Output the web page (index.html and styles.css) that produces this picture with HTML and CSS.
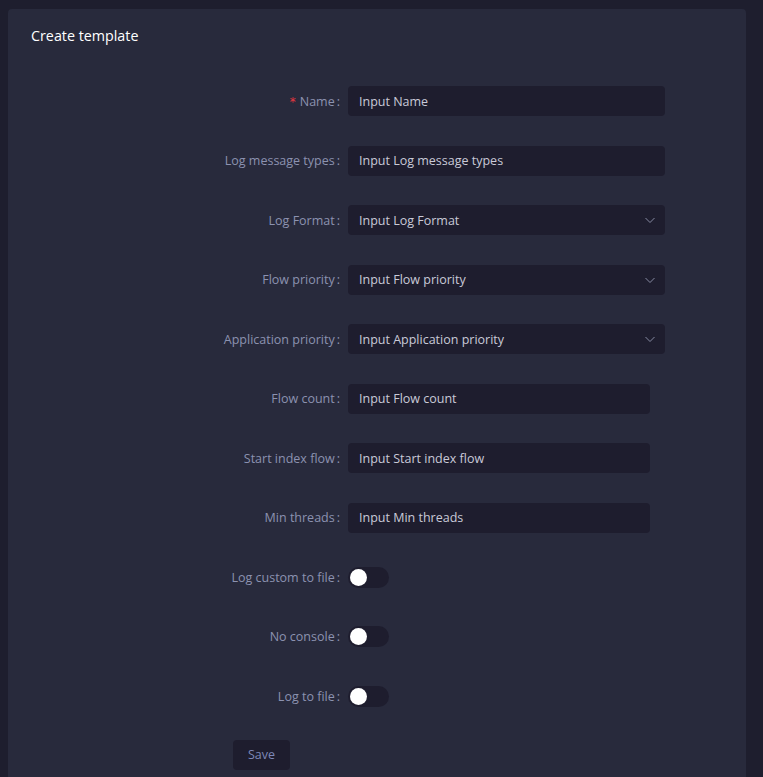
FILE: index.html
```html
<!DOCTYPE html>
<html>
<head>
<meta charset="utf-8">
<link rel="stylesheet" href="styles.css">
</head>
<body>
<div class="card">
  <h1 class="title">Create template</h1>
  <form class="form">
    <div class="row">
      <label class="label"><span class="req">*</span>Name<span class="colon">:</span></label>
      <div class="field wide"><span class="ph">Input Name</span></div>
    </div>
    <div class="row">
      <label class="label">Log message types<span class="colon">:</span></label>
      <div class="field wide"><span class="ph">Input Log message types</span></div>
    </div>
    <div class="row">
      <label class="label">Log Format<span class="colon">:</span></label>
      <div class="field wide select"><span class="ph">Input Log Format</span>
        <svg class="chev" width="12" height="8" viewBox="0 0 12 8"><path d="M1.5 2 L6 6.5 L10.5 2" fill="none" stroke="#868aa2" stroke-width="1"/></svg>
      </div>
    </div>
    <div class="row">
      <label class="label">Flow priority<span class="colon">:</span></label>
      <div class="field wide select"><span class="ph">Input Flow priority</span>
        <svg class="chev" width="12" height="8" viewBox="0 0 12 8"><path d="M1.5 2 L6 6.5 L10.5 2" fill="none" stroke="#868aa2" stroke-width="1"/></svg>
      </div>
    </div>
    <div class="row">
      <label class="label">Application priority<span class="colon">:</span></label>
      <div class="field wide select"><span class="ph">Input Application priority</span>
        <svg class="chev" width="12" height="8" viewBox="0 0 12 8"><path d="M1.5 2 L6 6.5 L10.5 2" fill="none" stroke="#868aa2" stroke-width="1"/></svg>
      </div>
    </div>
    <div class="row">
      <label class="label">Flow count<span class="colon">:</span></label>
      <div class="field narrow"><span class="ph">Input Flow count</span></div>
    </div>
    <div class="row">
      <label class="label">Start index flow<span class="colon">:</span></label>
      <div class="field narrow"><span class="ph">Input Start index flow</span></div>
    </div>
    <div class="row">
      <label class="label">Min threads<span class="colon">:</span></label>
      <div class="field narrow"><span class="ph">Input Min threads</span></div>
    </div>
    <div class="row">
      <label class="label">Log custom to file<span class="colon">:</span></label>
      <div class="switch"><span class="knob"></span></div>
    </div>
    <div class="row">
      <label class="label">No console<span class="colon">:</span></label>
      <div class="switch"><span class="knob"></span></div>
    </div>
    <div class="row">
      <label class="label">Log to file<span class="colon">:</span></label>
      <div class="switch"><span class="knob"></span></div>
    </div>
    <div class="actions">
      <button type="button" class="btn">Save</button>
    </div>
  </form>
</div>
</body>
</html>
```
FILE: styles.css
```css
html, body {
  margin: 0;
  padding: 0;
  background: #1e1e2e;
  height: 100%;
  overflow: hidden;
}
body {
  padding: 9px 17px 0 8px;
  font-family: "Open Sans", "Noto Sans", sans-serif;
  font-size: 12.5px;
}
.card {
  background: #282a3c;
  border-radius: 4px;
  padding: 17px 23px 40px;
  min-height: 760px;
  box-sizing: border-box;
}
.title {
  margin: 0;
  font-size: 14.3px;
  font-weight: 400;
  color: #ffffff;
  line-height: 20px;
}
.form {
  margin-top: 40px;
}
.row {
  display: flex;
  align-items: center;
  height: 30px;
  margin-bottom: 29.5px;
}
.label {
  width: 317px;
  flex: none;
  text-align: right;
  color: #8c92b0;
  white-space: nowrap;
}
.req {
  color: #e8373f;
  margin-right: 4px;
  font-family: "DejaVu Sans", sans-serif;
  font-size: 12px;
}
.colon {
  margin-left: 2px;
  margin-right: 8px;
}
.field {
  height: 30px;
  box-sizing: border-box;
  background: #1e1d2e;
  border-radius: 4px;
  display: flex;
  align-items: center;
  padding: 0 11px;
  color: #c9cad8;
}
.wide { width: 317px; }
.narrow { width: 302px; }
.select { justify-content: space-between; padding-right: 9px; }
.chev { display: block; }
.switch {
  width: 41px;
  height: 21px;
  border-radius: 11px;
  background: #1e1d2e;
  position: relative;
}
.knob {
  position: absolute;
  left: 2px;
  top: 2px;
  width: 17px;
  height: 17px;
  border-radius: 50%;
  background: #ffffff;
}
.actions {
  padding-left: 202px;
  margin-top: -1px;
}
.btn {
  width: 57px;
  height: 30px;
  border: none;
  border-radius: 4px;
  background: #1e1d2e;
  color: #7d88b8;
  font-family: inherit;
  font-size: 12.5px;
  padding: 0;
}
```
